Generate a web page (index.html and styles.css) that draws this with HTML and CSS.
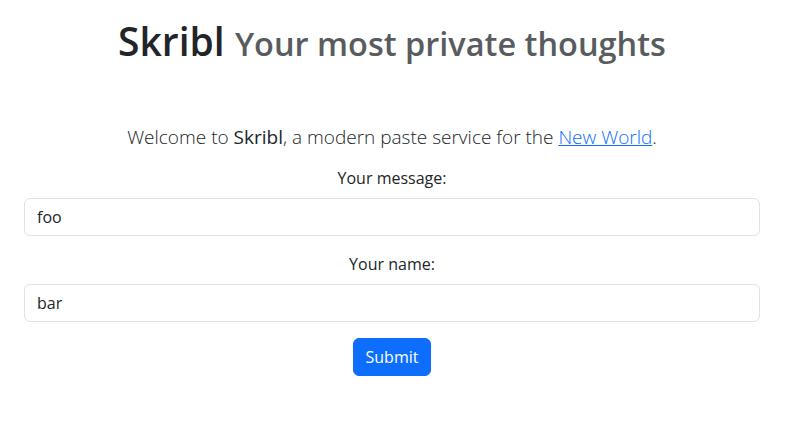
FILE: index.html
```html
<!DOCTYPE html>
<html lang="en">
<head>
<meta charset="utf-8">
<title>Skribl</title>
<link rel="stylesheet" href="styles.css">
</head>
<body>
<main class="page">
  <h1 class="title">Skribl <small class="subtitle">Your most private thoughts</small></h1>
  <p class="lead">Welcome to <span class="brand">Skribl</span>, a modern paste service for the <a href="#" class="link">New World</a>.</p>
  <form class="form">
    <label class="label" for="msg">Your message:</label>
    <input class="control" id="msg" type="text" value="foo">
    <label class="label" for="name">Your name:</label>
    <input class="control" id="name" type="text" value="bar">
    <button class="btn" type="button">Submit</button>
  </form>
</main>
</body>
</html>
```
FILE: styles.css
```css
html, body {
  margin: 0;
  padding: 0;
  background: #fff;
}
body {
  font-family: "Open Sans", "Noto Sans", sans-serif;
  color: #212529;
  font-size: 16px;
  line-height: 1.5;
}
.page {
  width: 784px;
  box-sizing: border-box;
  padding: 0 24px;
  text-align: center;
}
.title {
  margin: 0;
  padding-top: 17px;
  font-size: 39px;
  font-weight: 600;
  line-height: 48px;
  white-space: nowrap;
}
.subtitle {
  font-size: 32.5px;
  color: #595c5f;
  font-weight: 600;
}
.lead {
  margin: 54px 0 0;
  font-size: 19px;
  font-weight: 300;
  line-height: 30px;
}
.brand {
  font-weight: 400;
}
.link {
  color: #0d6efd;
  text-decoration: underline;
}
.form {
  display: flex;
  flex-direction: column;
  align-items: stretch;
  margin-top: 14px;
}
.label {
  display: block;
  line-height: 24px;
  margin-bottom: 8px;
}
.control {
  display: block;
  height: 38px;
  box-sizing: border-box;
  padding: 6px 12px;
  font: inherit;
  color: #212529;
  border: 1px solid #dee2e6;
  border-radius: 6px;
  margin-bottom: 16px;
  background: #fff;
}
.btn {
  align-self: center;
  height: 38px;
  padding: 6px 12px;
  font: inherit;
  color: #fff;
  background: #0d6efd;
  border: 1px solid #0d6efd;
  border-radius: 6px;
}
```
